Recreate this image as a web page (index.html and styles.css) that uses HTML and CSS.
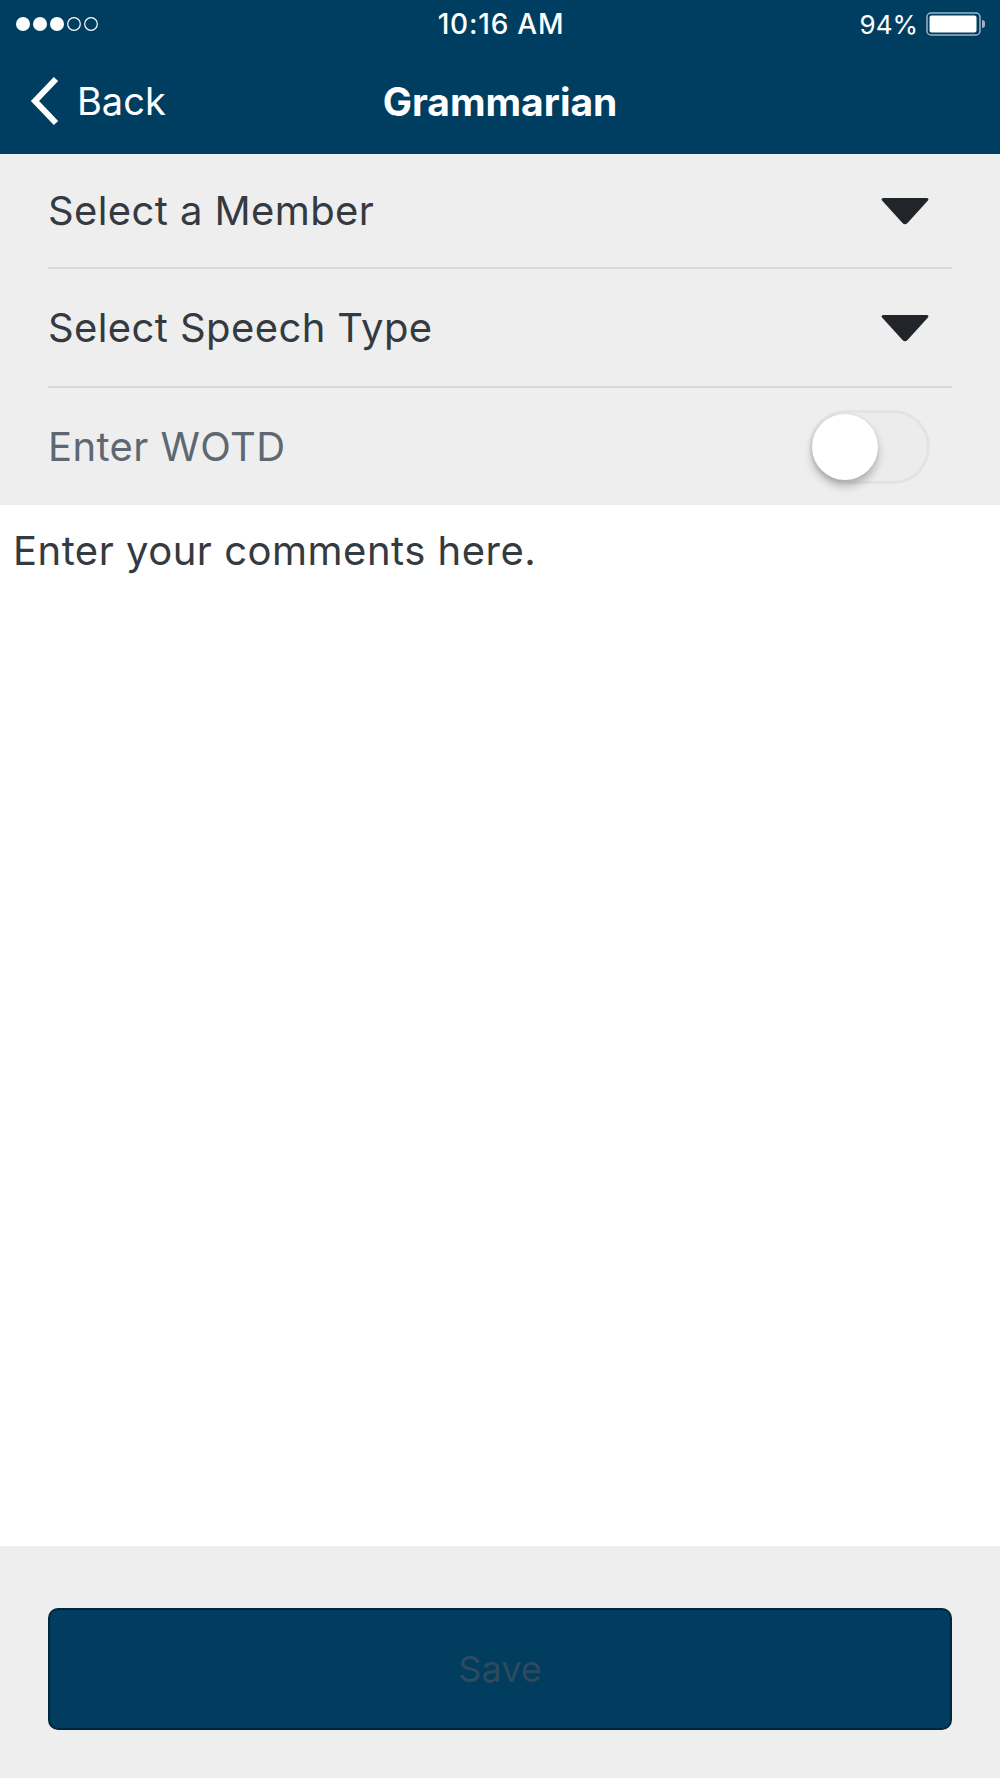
FILE: index.html
```html
<!DOCTYPE html>
<html lang="en">
<head>
    <meta charset="UTF-8">
    <meta name="viewport" content="width=device-width, initial-scale=1.0">
    <title>Grammarian</title>
    <link rel="stylesheet" href="styles.css">
</head>
<body>
    <header class="top">
        <!-- Status bar -->
        <div class="status-bar">
            <svg class="signal" width="82" height="14" viewBox="0 0 82 14">
                <circle cx="7" cy="7" r="7" fill="#fff"/>
                <circle cx="24" cy="7" r="7" fill="#fff"/>
                <circle cx="41" cy="7" r="7" fill="#fff"/>
                <circle cx="58" cy="7" r="6.3" fill="none" stroke="#fff" stroke-width="1.2"/>
                <circle cx="75" cy="7" r="6.3" fill="none" stroke="#fff" stroke-width="1.2"/>
            </svg>
            <div class="clock">10:16 AM</div>
            <div class="battery">
                <span>94%</span>
                <svg width="60" height="24" viewBox="0 0 60 24">
                    <rect x="1" y="1" width="53" height="22" rx="4" fill="none" stroke="#9fb3c2" stroke-width="1.5"/>
                    <rect x="3.5" y="3.5" width="47" height="17" rx="2" fill="#fff"/>
                    <path d="M56 8 Q59 8 59 11 V13 Q59 16 56 16 Z" fill="#9fb3c2"/>
                </svg>
            </div>
        </div>

        <!-- Navigation bar -->
        <nav class="nav-bar">
            <a class="back" href="#">
                <svg width="30" height="50" viewBox="0 0 30 50">
                    <polyline points="26,3 5,25 26,47" fill="none" stroke="#fff" stroke-width="6"/>
                </svg>
                <span>Back</span>
            </a>
            <h1 class="title">Grammarian</h1>
            <div></div>
        </nav>
    </header>

    <section class="form-list">
        <div class="form-row row-member">
            <span class="label">Select a Member</span>
            <svg class="caret" width="50" height="28" viewBox="0 0 50 28">
                <path d="M4 1 H46 Q50 1 47.5 4 L27.5 26 Q25 28.5 22.5 26 L2.5 4 Q0 1 4 1 Z" fill="#212529"/>
            </svg>
        </div>
        <div class="form-row row-speech">
            <span class="label">Select Speech Type</span>
            <svg class="caret" width="50" height="28" viewBox="0 0 50 28">
                <path d="M4 1 H46 Q50 1 47.5 4 L27.5 26 Q25 28.5 22.5 26 L2.5 4 Q0 1 4 1 Z" fill="#212529"/>
            </svg>
        </div>
        <div class="form-row row-wotd">
            <span class="label muted">Enter WOTD</span>
            <div class="switch">
                <div class="knob"></div>
            </div>
        </div>
    </section>

    <div class="comments">Enter your comments here.</div>

    <footer class="footer">
        <button class="save-btn">Save</button>
    </footer>
</body>
</html>
```

FILE: styles.css
```css
body {
    font-family: Inter, "Liberation Sans", sans-serif;
    margin: 0;
    padding: 0;
    width: 1000px;
    height: 1778px;
    display: flex;
    flex-direction: column;
    background-color: #eeeeee;
    color: #343a40;
}

/* Header */
.top {
    background-color: #003e61;
    color: #fff;
}

.status-bar {
    height: 48px;
    display: grid;
    grid-template-columns: 1fr auto 1fr;
    align-items: center;
    padding: 0 14px 0 16px;
}

.signal {
    display: block;
}

.clock {
    font-size: 28px;
    font-weight: 500;
    letter-spacing: 0.8px;
}

.battery {
    display: flex;
    align-items: center;
    justify-content: flex-end;
    gap: 8px;
    font-size: 26px;
}

.battery svg {
    display: block;
}

.nav-bar {
    height: 106px;
    display: grid;
    grid-template-columns: 1fr auto 1fr;
    align-items: center;
    padding: 0 30px;
}

.back {
    display: flex;
    align-items: center;
    gap: 17px;
    color: #fff;
    text-decoration: none;
    font-size: 38px;
}

.back svg {
    display: block;
}

.title {
    margin: 0;
    font-size: 39px;
    font-weight: 700;
}

/* Form rows */
.form-list {
    padding: 0 48px;
}

.form-row {
    display: flex;
    align-items: center;
    justify-content: space-between;
    padding-right: 22px;
    box-sizing: border-box;
    border-bottom: 2px solid #d5d9db;
}

.row-member {
    height: 115px;
}

.row-speech {
    height: 119px;
}

.row-wotd {
    height: 117px;
    border-bottom: none;
}

.label {
    font-size: 40px;
    letter-spacing: 0.4px;
}

.label.muted {
    color: #5d6872;
}

.caret {
    display: block;
}

.switch {
    position: relative;
    width: 121px;
    height: 74px;
    box-sizing: border-box;
    border: 3px solid #e3e3e3;
    border-radius: 40px;
    background-color: #ececec;
}

.knob {
    position: absolute;
    top: 1px;
    left: 0;
    width: 66px;
    height: 66px;
    border-radius: 50%;
    background-color: #fff;
    box-shadow: 0 6px 8px rgba(0, 0, 0, 0.25), 0 0 2px rgba(0, 0, 0, 0.1);
}

/* Comments area */
.comments {
    flex-grow: 1;
    background-color: #fff;
    padding: 21px 13px;
    font-size: 40px;
    letter-spacing: 0.5px;
}

/* Footer */
.footer {
    height: 232px;
    box-sizing: border-box;
    padding: 62px 48px 48px;
}

.save-btn {
    width: 100%;
    height: 122px;
    background-color: #003d5f;
    border: 2px solid #00253c;
    border-radius: 10px;
    color: #2d4a5e;
    font-family: Inter, "Liberation Sans", sans-serif;
    font-size: 36px;
}
```
